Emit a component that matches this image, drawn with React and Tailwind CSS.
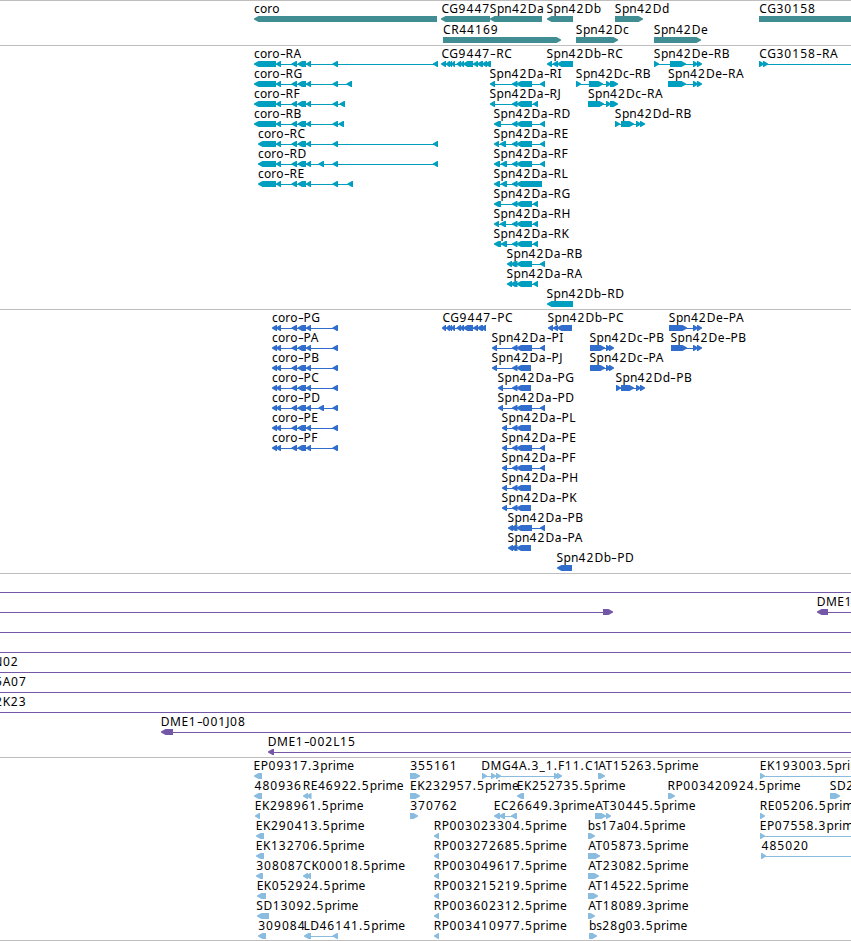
import React from "react";

// Feature: [label, label x, direction, segments, line end?, line start?]
const L = -1;
const R = 1;

const coroR = [[276, 281], [291.5, 297], [297.5, 306], [306, 311], [332.5, 338]];
const coroP = [[272, 277], [276, 281], [291.5, 297], [297.5, 306], [306, 311], [332.5, 338]];
const da = (...first) => [...first, [512, 517.5], [516.5, 532]];
const daP = (...first) => [...first, [512, 517.5], [516.5, 531]];
const E1 = [540, 545];
const E2 = [533, 538];
const cgCommon = [[446, 450], [449, 452], [451, 455], [456.5, 461], [460, 464], [463, 473], [473, 478], [477, 483], [482, 487]];

const genes = [
  [
    ["coro", 253.6, L, [[254, 437]]],
    ["CG9447", 441, L, [[441, 490]]],
    ["Spn42Da", 489.3, L, [[490, 542]]],
    ["Spn42Db", 546, L, [[547, 573]]],
    ["Spn42Dd", 614.3, R, [[615, 643]]],
    ["CG30158", 758.8, R, [[759, 870]]],
  ],
  [
    ["CR44169", 442.6, R, [[443, 561]]],
    ["Spn42Dc", 575.3, R, [[576, 618]]],
    ["Spn42De", 653.3, R, [[654, 701]]],
  ],
];

const transcripts = [
  [
    ["coro-RA", 253.6, L, [[254, 276], ...coroR, [433, 438]]],
    ["CG9447-RC", 441, L, [[441, 446], ...cgCommon, [485, 491]]],
    ["Spn42Db-RC", 546, L, [[547, 552], [552.5, 558], [557, 573]]],
    ["Spn42De-RB", 653.3, R, [[654, 659], [670, 686], [693, 698], [697, 702]]],
    ["CG30158-RA", 758.8, R, [[759, 764], [763, 768]], 851],
  ],
  [
    ["coro-RG", 253.6, L, [[254, 276], ...coroR, [346.5, 352]]],
    ["Spn42Da-RI", 489, L, [...da([490, 495]), E1]],
    ["Spn42Dc-RB", 575.3, R, [[576, 581], [589, 603], [606, 611], [610, 618]]],
    ["Spn42De-RA", 667.5, R, [[668, 686], [693, 698], [697, 702]]],
  ],
  [
    ["coro-RF", 253.6, L, [[254, 276], ...coroR, [339.5, 345]]],
    ["Spn42Da-RJ", 489, L, [...da([490, 495]), E2]],
    ["Spn42Dc-RA", 587.5, R, [[588, 604], [606, 611], [610, 618]]],
  ],
  [
    ["coro-RB", 253.6, L, [[254, 276], ...coroR, [338.5, 344]]],
    ["Spn42Da-RD", 493, L, [...da([494, 501]), E1]],
    ["Spn42Dd-RB", 614.3, R, [[615, 620], [621, 634], [636, 641], [640, 645]]],
  ],
  [
    ["coro-RC", 257.6, L, [[258, 276], ...coroR, [433, 438]]],
    ["Spn42Da-RE", 493, L, [...da([494, 499], [500, 506]), E1]],
  ],
  [
    ["coro-RD", 257.6, L, [[258, 276], ...coroR, [318.5, 324], [433, 438]]],
    ["Spn42Da-RF", 493, L, [...da([494, 500], [501, 507]), E1]],
  ],
  [
    ["coro-RE", 257.6, L, [[258, 276], ...coroR, [347.5, 353]]],
    ["Spn42Da-RL", 493, L, [[494, 500], [501, 507], [512, 517.5], [516.5, 542]]],
  ],
  [["Spn42Da-RG", 493, L, [...da([494, 501]), E2]]],
  [["Spn42Da-RH", 493, L, [...da([494, 499], [500, 506]), E2]]],
  [["Spn42Da-RK", 493, L, [...da([494, 501], [501, 507]), E2]]],
  [["Spn42Da-RB", 506, L, [...da([507, 512], [510.5, 516]), E1]]],
  [["Spn42Da-RA", 506, L, [...da([507, 512], [510.5, 516]), E2]]],
  [["Spn42Db-RD", 546, L, [[547, 573]]]],
];

const proteins = [
  [
    ["coro-PG", 271.6, L, coroP],
    ["CG9447-PC", 442, L, [[442, 446], ...cgCommon.slice(0, 8), [481, 486]]],
    ["Spn42Db-PC", 547, L, [[548, 553], [553, 558], [557, 572]]],
    ["Spn42De-PA", 668.3, R, [[669, 687], [693, 698], [697, 702]]],
  ],
  [
    ["coro-PA", 271.6, L, coroP],
    ["Spn42Da-PI", 491, L, [...da([492, 497]), E1]],
    ["Spn42Dc-PB", 589, R, [[590, 605], [606, 611], [609, 614]]],
    ["Spn42De-PB", 670, R, [[671, 687], [693, 698], [697, 702]]],
  ],
  [
    ["coro-PB", 271.6, L, coroP],
    ["Spn42Da-PJ", 491, L, daP([492, 497])],
    ["Spn42Dc-PA", 589, R, [[590, 605], [606, 611], [609, 614]]],
  ],
  [
    ["coro-PC", 271.6, L, coroP],
    ["Spn42Da-PG", 497, L, daP([498, 503])],
    ["Spn42Dd-PB", 615, R, [[616, 621], [621, 634], [636, 641], [640, 645]]],
  ],
  [
    ["coro-PD", 271.6, L, [...coroP.slice(0, 5), [318.5, 324], [332.5, 338]]],
    ["Spn42Da-PD", 497, L, [...da([498, 503]), E1]],
  ],
  [["coro-PE", 271.6, L, coroP], ["Spn42Da-PL", 501, L, daP([502, 507])]],
  [["coro-PF", 271.6, L, coroP], ["Spn42Da-PE", 501, L, [...da([502, 507]), E1]]],
  [["Spn42Da-PF", 501, L, [...da([502, 507]), E1]]],
  [["Spn42Da-PH", 501, L, daP([502, 507])]],
  [["Spn42Da-PK", 501, L, daP([502, 507])]],
  [["Spn42Da-PB", 507, L, [...da([508, 513], [511, 516]), E1]]],
  [["Spn42Da-PA", 507, L, daP([508, 513], [511, 516])]],
  [["Spn42Db-PD", 556, L, [[557, 572]]]],
];

const full = (label = "", x = 0) => [label, x, L, [], 851, 0];

const clones = [
  [full()],
  [
    ["", 0, R, [[603, 613]], 604, 0],
    ["DME1", 816.2, L, [[817, 828]], 851],
  ],
  [full()],
  [full()],
  [full("N02", -7.2)],
  [full("5A07", -5.6)],
  [full("2K23", -5.6)],
  [["DME1-001J08", 160.3, L, [[161, 173]], 851]],
  [["DME1-002L15", 267.3, L, [[268, 274]], 851]],
];

const rp = (label) => [label, 433.2, L, [[434, 439]]];

const ests = [
  [
    ["EP09317.3prime", 253.1, L, [[254, 262]]],
    ["355161", 409.7, R, [[410, 420]]],
    ["DMG4A.3_1.F11.C1", 480.8, R, [[482, 487], [491, 496], [496, 501], [554, 559], [557, 562]]],
    ["AT15263.5prime", 597.8, R, [[598, 605]]],
    ["EK193003.5prime", 759.3, R, [[760, 765]], 851],
  ],
  [
    ["480936", 254, L, [[254, 262]]],
    ["RE46922.5prime", 302.3, L, [[303, 308], [306.5, 311.5]]],
    ["EK232957.5prime", 409.6, R, [[410, 420]]],
    ["EK252735.5prime", 516.3, L, [[517, 524]]],
    ["RP003420924.5prime", 667.1, R, [[668, 675]]],
    ["SD2", 829.3, R, [[830, 840]]],
  ],
  [
    ["EK298961.5prime", 254.3, L, [[255, 260]]],
    ["370762", 409.7, R, [[410, 418]]],
    ["EC26649.3prime", 493.3, L, [[494, 500], [499, 505], [511, 517]]],
    ["AT30445.5prime", 594.8, R, [[595, 606], [606, 611]]],
    ["RE05206.5prime", 759.3, R, [[760, 765]]],
  ],
  [
    ["EK290413.5prime", 255.3, L, [[256, 264]]],
    rp("RP003023304.5prime"),
    ["bs17a04.5prime", 587.2, R, [[588, 595]]],
    ["EP07558.3prime", 759.3, R, [[760, 765]], 851],
  ],
  [
    ["EK132706.5prime", 255.3, L, [[256, 264]]],
    rp("RP003272685.5prime"),
    ["AT05873.5prime", 587.8, R, [[588, 600]]],
    ["485020", 761, R, [[761, 766]], 851],
  ],
  [
    ["308087", 255.7, L, [[256, 263]]],
    ["CK00018.5prime", 302.8, L, [[303, 308], [306, 311]]],
    rp("RP003049617.5prime"),
    ["AT23082.5prime", 587.8, R, [[588, 599]]],
  ],
  [
    ["EK052924.5prime", 256.2, L, [[257, 266]]],
    rp("RP003215219.5prime"),
    ["AT14522.5prime", 587.8, R, [[588, 598]]],
  ],
  [
    ["SD13092.5prime", 255.8, L, [[257, 269]]],
    rp("RP003602312.5prime"),
    ["AT18089.3prime", 587.8, R, [[588, 595]]],
  ],
  [
    ["309084", 257.7, L, [[258, 266]]],
    ["LD46141.5prime", 302.9, L, [[304, 311], [332.5, 338]]],
    rp("RP003410977.5prime"),
    ["bs28g03.5prime", 588.4, R, [[589, 597]]],
  ],
];

// Digits are set wider than letters, hyphens wider still.
function Label({ text, x }) {
  const runs = text.match(/[0-9._]+|-|[A-Z]+|[a-z]+/g) || [];
  return (
    <span className="absolute top-0 whitespace-pre leading-4" style={{ left: x + 0.5 }}>
      {runs.map((run, i) => {
        if (run === "-")
          return (
            <span key={i} className="inline-block w-[6px] scale-x-150 text-center">
              -
            </span>
          );
        const tracking = /[0-9._]/.test(run)
          ? "tracking-[1.05px]"
          : /[A-Z]/.test(run)
            ? "tracking-[0.5px]"
            : "tracking-[0.1px]";
        return (
          <span key={i} className={tracking}>
            {run}
          </span>
        );
      })}
    </span>
  );
}

// Block arrow with a narrow, slightly blunt tip.
function arrow([a, b], dir) {
  const h = Math.min(4.5, b - a - 0.8);
  return dir === L
    ? `${a},17.6 ${a + h},15 ${b},15 ${b},21 ${a + h},21 ${a},18.6`
    : `${b},17.6 ${b - h},15 ${a},15 ${a},21 ${b - h},21 ${b},18.6`;
}

function Row({ features, height }) {
  return (
    <div className={`relative ${height}`}>
      <svg className="block h-full w-[851px] overflow-visible" fill="currentColor">
        {features.map(([, , dir, segs, to, from], i) => {
          const start = from ?? segs[0][0] + 2;
          const end = to ?? segs[segs.length - 1][1] - 2;
          return (
            <g key={i}>
              {(segs.length > 1 || to) && (
                <rect x={start} y="18" width={end - start} height="1" />
              )}
              {segs.map((s, j) => (
                <polygon key={j} points={arrow(s, dir)} />
              ))}
            </g>
          );
        })}
      </svg>
      <div className="text-black">
        {features.map(([label, x], i) => label && <Label key={i} text={label} x={x} />)}
      </div>
    </div>
  );
}

function Track({ rows, className, height = "h-5" }) {
  return (
    <section className={`border-t border-[#bebebe] ${className}`}>
      {rows.map((features, i) => (
        <Row key={i} features={features} height={height} />
      ))}
    </section>
  );
}

export default function App() {
  return (
    <main className="flex h-[941px] w-[851px] flex-col overflow-hidden border-b border-[#bebebe] bg-white font-['Noto_Sans',sans-serif] text-[12px]">
      <Track rows={genes} height="h-[21px]" className="pb-[2px] text-[#408e94]" />
      <Track rows={transcripts} className="pb-[3px] text-[#009ebf]" />
      <Track rows={proteins} className="pb-[3px] text-[#306dcc]" />
      <Track rows={clones} className="pb-[3px] text-[#7557a8]" />
      <Track rows={ests} className="pb-[2px] text-[#89bcde]" />
    </main>
  );
}
